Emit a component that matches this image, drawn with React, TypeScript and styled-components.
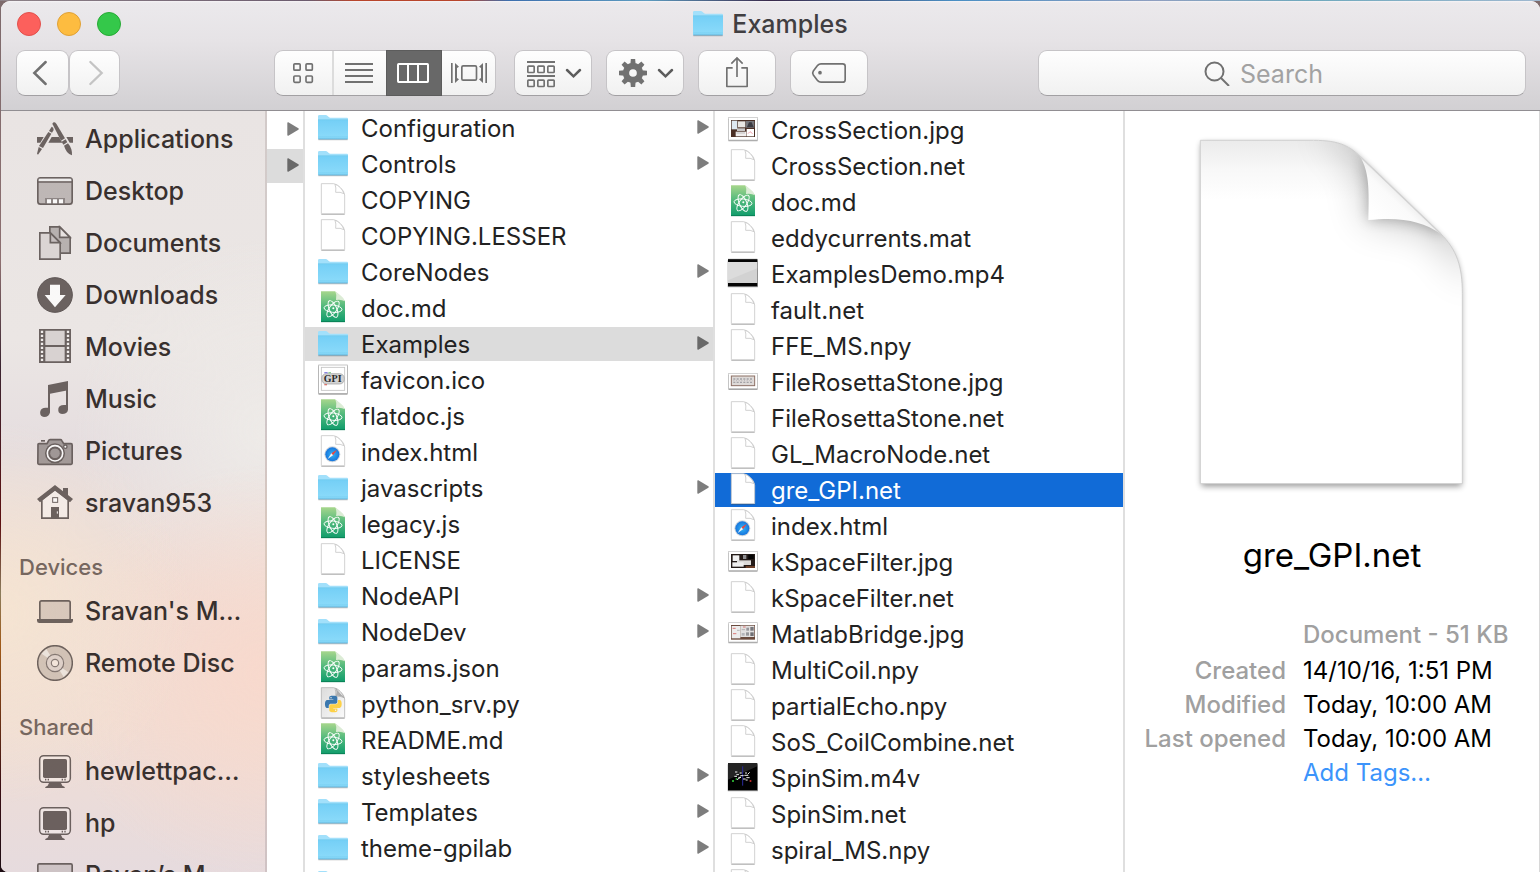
import React from "react";
import styled, { createGlobalStyle, css } from "styled-components";

const GlobalStyle = createGlobalStyle`
  *, *::before, *::after { box-sizing: border-box; }
  html, body { margin: 0; padding: 0; }
  body {
    background: #3a1418;
    font-family: Inter, "Liberation Sans", sans-serif;
    overflow: hidden;
  }
  button, input { font: inherit; color: inherit; }
  ul, dl, dd, h1, h2 { margin: 0; padding: 0; list-style: none; }
`;

const Desktop = styled.div`
  height: 100vh;
  padding: 1px 0 0 1px;
  background:
    linear-gradient(90deg, #8d8288 0, #6b5b6e 20%, #b8452c 23%, #b8452c 30%, #3d6fae 33%, #5d9cc0 42%, #3a2a4c 50%, #4a8fc4 62%, #8f9fc0 75%, #6fa9bd 85%, #9fb8d0 100%) top / 100% 1px no-repeat,
    linear-gradient(180deg, #7d6a6c 0, #8d6f70 30%, #3b2430 42%, #5c0f10 60%, #8b7c5c 68%, #a05a18 74%, #3a0d12 90%, #1c0c12 100%);
`;

const Window = styled.div`
  height: 100%;
  display: flex;
  flex-direction: column;
  overflow: hidden;
  border-radius: 9px 9px 0 7px;
  background: #fff;
`;

/* ---------- title bar ---------- */

const Header = styled.header`
  flex: none;
  border-bottom: 1px solid #918e92;
  background: linear-gradient(180deg, #f6f4f6 0, #ebe9ec 2px, #e6e3e6 40px, #d2d0d3 100%);
`;

const TitleRow = styled.div`
  display: grid;
  grid-template-columns: 1fr auto 1fr;
  align-items: center;
  height: 45px;
  padding: 0 16px;
  margin-bottom: 4px;
`;

const Lights = styled.div`
  display: flex;
  gap: 16px;
`;

const Light = styled.button<{ $fill: string; $edge: string }>`
  width: 24px;
  height: 24px;
  padding: 0;
  border: 1px solid ${(p) => p.$edge};
  border-radius: 50%;
  background: ${(p) => p.$fill};
`;

const Title = styled.h1`
  display: flex;
  align-items: center;
  gap: 9px;
  font-size: 25px;
  line-height: 34px;
  font-weight: 500;
  color: #403e41;
`;

const Toolbar = styled.div`
  display: flex;
  align-items: center;
  padding: 0 14px 14px 15px;
`;

const panel = css`
  height: 46px;
  border: 1px solid #c6c4c7;
  border-bottom-color: #a2a0a3;
  border-radius: 9px;
  background: linear-gradient(180deg, #fefefe, #f1f1f1);
`;

const ToolButton = styled.button<{ $width: number }>`
  ${panel}
  flex: none;
  display: flex;
  width: ${(p) => p.$width}px;
  padding: 0;
  color: #717171;
`;

const NavGroup = styled.nav`
  display: flex;
  margin-right: 154px;
`;

const Views = styled.div`
  ${panel}
  flex: none;
  display: flex;
  margin-right: 18px;
`;

const ViewButton = styled.button<{ $width: number; $active?: boolean; $divided?: boolean }>`
  display: flex;
  align-items: center;
  width: ${(p) => p.$width}px;
  padding: 0;
  border: 0;
  border-right: ${(p) => (p.$divided ? "2px solid #dcdcdc" : "0")};
  background: none;
  color: #717171;
  ${(p) =>
    p.$active &&
    css`
      height: 46px;
      margin: -1px 0;
      background: #686868;
      box-shadow: inset 0 0 0 1px #5c5c5c;
      color: #fff;
    `}
`;

const Actions = styled.div`
  display: flex;
  gap: 14px;
  margin-right: 170px;
`;

const SearchBox = styled.label`
  ${panel}
  flex: 1;
  display: flex;
  align-items: center;
  justify-content: center;
  gap: 10px;
  min-width: 180px;
  color: #717171;
`;

const SearchInput = styled.input`
  width: 120px;
  height: 40px;
  padding: 2px 0 0;
  border: 0;
  outline: 0;
  background: none;
  font-size: 25px;
  &::placeholder {
    color: #a2a2a2;
    opacity: 1;
  }
`;

/* ---------- body ---------- */

const Body = styled.div`
  flex: 1;
  min-height: 0;
  display: flex;
`;

const Sidebar = styled.nav`
  flex: none;
  width: 266px;
  padding-top: 3px;
  overflow: hidden;
  border-right: 2px solid rgba(120, 100, 100, 0.2);
  background:
    radial-gradient(circle at 0 66%, #f5e4d2 0, rgba(245, 228, 210, 0) 190px),
    radial-gradient(circle at 100% 74%, #f8d9cd 0, rgba(248, 217, 205, 0) 210px),
    radial-gradient(circle at 100% 42%, #eeebe8 0, rgba(238, 235, 232, 0) 190px),
    linear-gradient(180deg, #e9e4e3 0, #ebe6e4 30%, #e5dddf 45%, #eeddd6 62%, #f0ddd4 80%, #e6dbde 100%);
`;

const SideHeading = styled.h2`
  padding: 18px 0 0 18px;
  font-size: 22px;
  line-height: 38px;
  font-weight: 500;
  color: #76675f;
`;

const SideLink = styled.a`
  display: flex;
  align-items: center;
  gap: 12px;
  height: 52px;
  padding: 0 0 2px 36px;
  font-size: 25px;
  font-weight: 500;
  color: #38302e;
  text-decoration: none;
  white-space: nowrap;
`;

const SideSvg = styled.svg`
  flex: none;
  width: 36px;
  height: 36px;
  color: #443a38;
  opacity: 0.76;
`;

const Column = styled.ul<{ $width: number; $top: number }>`
  flex: none;
  width: ${(p) => p.$width}px;
  padding-top: ${(p) => p.$top}px;
  overflow: hidden;
  border-right: 2px solid #dfdfdf;
`;

const Row = styled.button<{ $state?: "path" | "selected" }>`
  display: flex;
  align-items: center;
  gap: 12px;
  width: 100%;
  height: 34px;
  margin-bottom: 2px;
  padding: 0 4px 0 12px;
  border: 0;
  background: ${(p) => (p.$state === "path" ? "#dcdcdc" : p.$state === "selected" ? "#116bd7" : "none")};
  color: ${(p) => (p.$state === "selected" ? "#fff" : "#222")};
  font-size: 24px;
  line-height: 34px;
  text-align: left;
  white-space: nowrap;
`;

const Name = styled.span`
  flex: 1;
  padding-top: 2px;
`;

const FileSvg = styled.svg`
  flex: none;
  width: 32px;
  height: 34px;
`;

const ArrowSvg = styled.svg`
  flex: none;
  width: 12px;
  height: 14px;
  margin: 0 0 2px auto;
`;

const Preview = styled.section`
  flex: 1;
  min-width: 0;
  padding-top: 19px;
  border-right: 1px solid #d8d8d8;
  color: #000;
`;

const PreviewSvg = styled.svg`
  display: block;
  width: 282px;
  height: 370px;
  margin: 0 auto;
`;

const PreviewName = styled.h2`
  margin: 35px 0 43px;
  font-size: 33px;
  line-height: 40px;
  font-weight: 400;
  text-align: center;
`;

const Facts = styled.dl`
  display: grid;
  grid-template-columns: 161px 1fr;
  column-gap: 17px;
  font-size: 24px;
  line-height: 34px;
  white-space: nowrap;
`;

const Label = styled.dt`
  text-align: right;
  font-weight: 500;
  color: #a0a0a0;
`;

const Value = styled.dd<{ $muted?: boolean }>`
  font-weight: ${(p) => (p.$muted ? 500 : 400)};
  color: ${(p) => (p.$muted ? "#a0a0a0" : "#000")};
  ${(p) => p.$muted && "padding-bottom: 2px;"}
`;

const TagLink = styled.a`
  color: #3c94fb;
  text-decoration: none;
`;

const DefsSvg = styled.svg`
  position: absolute;
  width: 0;
  height: 0;
`;

/* ---------- drawings ---------- */

const SharedDefs = () => (
  <DefsSvg aria-hidden="true">
    <defs>
      <linearGradient id="folder" x1="0" y1="0" x2="0" y2="1">
        <stop offset="0" stopColor="#74cff6" />
        <stop offset="1" stopColor="#8cdbfa" />
      </linearGradient>
      <linearGradient id="atom" x1="0" y1="0" x2="0" y2="1">
        <stop offset="0" stopColor="#a6d68c" />
        <stop offset="0.5" stopColor="#4fb87c" />
        <stop offset="1" stopColor="#0f9c6b" />
      </linearGradient>
      <linearGradient id="grey" x1="0" y1="0" x2="1" y2="1">
        <stop offset="0" stopColor="#dcdcdc" />
        <stop offset="1" stopColor="#fafafa" />
      </linearGradient>
      <radialGradient id="compass">
        <stop offset="0" stopColor="#35b6f5" />
        <stop offset="1" stopColor="#1674dd" />
      </radialGradient>
    </defs>
  </DefsSvg>
);

const FolderShape = () => (
  <g>
    <path d="M4 86H92" stroke="#000" strokeOpacity=".22" strokeWidth="4" />
    <path d="M3 84V16q0-4 4-4H26q3 0 6 3t7 5H90q3 0 3 3V84z" fill="#a2e0fb" />
    <path d="M3 26H93V81q0 3-3 3H6q-3 0-3-3z" fill="url(#folder)" />
    <path d="M3 26H93M4 78H92" stroke="#63bfe6" strokeOpacity=".6" strokeWidth="2" />
    <path d="M4 84H92" stroke="#55a9d2" strokeWidth="2.5" />
  </g>
);

const Page = ({ fill = "#fff", edge = "#c9c9c9" }: { fill?: string; edge?: string }) => (
  <g>
    <path d="M13 94H83" stroke="#000" strokeOpacity=".3" strokeWidth="3" />
    <path d="M13 2H50Q60 3 70 14Q82 24 83 36V92H13z" fill={fill} stroke={edge} strokeWidth="2.5" />
    <path d="M54 4Q58 14 56 28Q70 26 81 32Q76 20 70 14Q62 6 54 4z" fill="#fff" stroke={edge} strokeWidth="2.5" />
  </g>
);

const PY_HALF =
  "M14.25.18l.9.2.73.26.59.3.45.32.34.34.25.34.16.33.1.3.04.26.02.2-.01.13V8.5l-.05.63-.13.55-.21.46-.26.38-.3.31-.33.25-.35.19-.35.14-.33.1-.3.07-.26.04-.21.02H8.77l-.69.05-.59.14-.5.22-.41.27-.33.32-.27.35-.2.36-.15.37-.1.35-.07.32-.04.27-.02.21v3.06H3.17l-.21-.03-.28-.07-.32-.12-.35-.18-.36-.26-.36-.36-.35-.46-.32-.59-.28-.73-.21-.88-.14-1.05-.05-1.23.06-1.22.16-1.04.24-.87.32-.71.36-.57.4-.44.42-.33.42-.24.4-.16.36-.1.32-.05.24-.01h.16l.06.01h8.16v-.83H6.18l-.01-2.75-.02-.37.05-.34.11-.31.17-.28.25-.26.31-.23.38-.2.44-.18.51-.15.58-.12.64-.1.71-.06.77-.04.84-.02 1.27.05zm-6.3 1.98l-.23.33-.08.41.08.41.23.34.33.22.41.09.41-.09.33-.22.23-.34.08-.41-.08-.41-.23-.33-.33-.22-.41-.09-.41.09z";

const Frame = ({ top, bottom, children }: { top: number; bottom: number; children: React.ReactNode }) => (
  <g>
    <rect x="4" y={top + 4} width="88" height={bottom - top} fill="#000" opacity=".35" rx="2" />
    <rect x="5" y={top} width="86" height={bottom - top} fill="#fff" stroke="#bdbdbd" strokeWidth="2" />
    {children}
  </g>
);

type Kind = "folder" | "page" | "atom" | "favicon" | "safari" | "python" | "cross" | "rosetta" | "kspace" | "matlab" | "mp4" | "m4v";

const drawings: Record<Kind, React.ReactNode> = {
  folder: <FolderShape />,
  page: <Page />,
  atom: (
    <g>
      <path d="M12 1H54L84 30V93H12z" fill="url(#atom)" />
      <path d="M12 92H84" stroke="#0a7f55" strokeWidth="3" />
      <path d="M55 1Q60 12 57 27Q72 24 84 31Q80 20 70 13z" fill="#dcecd6" />
      <g fill="none" stroke="#fff" strokeWidth="2.8">
        <ellipse cx="48" cy="53" rx="27" ry="11" transform="rotate(6 48 53)" />
        <ellipse cx="48" cy="54" rx="27" ry="11" transform="rotate(66 48 54)" />
        <ellipse cx="48" cy="54" rx="28" ry="11" transform="rotate(126 48 54)" />
      </g>
      <circle cx="49" cy="52" r="3" fill="#fff" />
    </g>
  ),
  favicon: (
    <g>
      <rect x="4" y="9" width="88" height="86" fill="#000" opacity=".35" rx="2" />
      <rect x="5" y="6" width="86" height="85" fill="#fff" stroke="#a8a8a8" strokeWidth="2" />
      <rect x="13" y="13" width="70" height="69" fill="#fff" stroke="#c2c2c2" strokeWidth="2.5" />
      <rect x="14" y="32" width="68" height="31" rx="14" fill="#d4d4d4" stroke="#9b9b9b" strokeWidth="2" />
      <path d="M22 29H32" stroke="#8a84e0" strokeWidth="4" />
      <path d="M34 29H42" stroke="#8fce9a" strokeWidth="4" />
      <path d="M22 65H30" stroke="#d9766d" strokeWidth="4" />
      <text x="47" y="58" textAnchor="middle" fontFamily="Liberation Serif, serif" fontWeight="700" fontSize="30" fill="#2b2b2b">GPI</text>
    </g>
  ),
  safari: (
    <g>
      <Page />
      <circle cx="46" cy="58" r="24" fill="#cfd6dc" />
      <circle cx="46" cy="58" r="21" fill="url(#compass)" />
      <path d="M60 44L48 61L43 55z" fill="#f0453c" />
      <path d="M32 72L43 55L48 61z" fill="#f5f5f5" />
    </g>
  ),
  python: (
    <g>
      <Page fill="url(#grey)" edge="#b5b5b5" />
      <path d="M56 4Q60 12 57 27Q70 25 82 32z" fill="#777" opacity=".6" />
      <g transform="translate(24 26) scale(2.08)">
        <path d={PY_HALF} fill="#3b78ae" />
        <path d={PY_HALF} fill="#fdd147" transform="rotate(180 12 12)" />
      </g>
    </g>
  ),
  cross: (
    <Frame top={13} bottom={81}>
      <rect x="12" y="21" width="72" height="51" fill="#4a2f25" />
      <rect x="14" y="23" width="17" height="26" fill="#dfe9f2" />
      <rect x="33" y="25" width="22" height="18" fill="#e9e6e3" />
      <rect x="56" y="24" width="26" height="20" fill="#77777c" />
      <path d="M60 42L66 28L74 28L80 42z" fill="#3b3b42" />
      <rect x="30" y="46" width="24" height="8" fill="#c9c6c6" />
      <rect x="26" y="56" width="32" height="14" fill="#f1eeee" />
      <rect x="59" y="48" width="22" height="22" fill="#fff" />
      <path d="M28 60H54" stroke="#aaa" strokeWidth="2" />
      <path d="M63 62L69 56L77 62" stroke="#e78" strokeWidth="2" fill="none" />
    </Frame>
  ),
  rosetta: (
    <Frame top={25} bottom={71}>
      <rect x="13" y="33" width="70" height="29" fill="#dedad8" stroke="#8c7065" strokeWidth="3" />
      <path d="M19 42H78M19 52H76" stroke="#a3a2a6" strokeWidth="4" strokeDasharray="6 4" />
      <path d="M19 47H76" stroke="#b8b6b8" strokeWidth="3" strokeDasharray="3 5" />
    </Frame>
  ),
  kspace: (
    <Frame top={19} bottom={76}>
      <rect x="12" y="27" width="72" height="42" fill="#241b18" />
      <rect x="17" y="31" width="20" height="17" fill="#f2f2f2" />
      <rect x="48" y="30" width="10" height="12" fill="#8d8d90" />
      <rect x="64" y="29" width="16" height="13" fill="#050505" />
      <rect x="30" y="46" width="42" height="14" fill="#dcdad8" />
      <rect x="16" y="52" width="34" height="13" fill="#efefef" />
      <path d="M56 66H84" stroke="#6b3f28" strokeWidth="6" />
    </Frame>
  ),
  matlab: (
    <Frame top={17} bottom={75}>
      <rect x="12" y="24" width="72" height="44" fill="#6a4a3d" />
      <rect x="14" y="27" width="26" height="37" fill="#ededed" />
      <rect x="40" y="26" width="42" height="34" fill="#e2e0e0" />
      <path d="M17 34H26M18 50H28M48 30H56" stroke="#dd7a78" strokeWidth="3" />
      <path d="M30 40H38M44 38H54" stroke="#999" strokeWidth="2" />
      <rect x="58" y="32" width="8" height="9" fill="#97979b" />
      <rect x="70" y="30" width="10" height="11" fill="#77777c" />
      <rect x="57" y="46" width="9" height="10" fill="#97979a" />
      <rect x="70" y="46" width="10" height="11" fill="#707075" />
      <rect x="44" y="48" width="9" height="8" fill="#b4b4b8" />
    </Frame>
  ),
  mp4: (
    <g>
      <rect x="2" y="9" width="91" height="82" fill="#000" opacity=".35" rx="2" />
      <rect x="3" y="6" width="88" height="82" fill="#050505" />
      <rect x="3" y="15" width="88" height="63" fill="#d2d2d2" />
      <path d="M3 15H91V34L3 70z" fill="#fff" opacity=".22" />
      <path d="M3 7H91" stroke="#444" strokeWidth="2" />
    </g>
  ),
  m4v: (
    <g>
      <rect x="2" y="9" width="91" height="82" fill="#000" opacity=".35" rx="2" />
      <rect x="3" y="6" width="88" height="82" fill="#000" />
      <path d="M3 6H91V16L3 56z" fill="#fff" opacity=".14" />
      <path d="M47 16V74" stroke="#2a2a9c" strokeWidth="3" />
      <path d="M24 33h7M28 41h8M38 36h6M22 46h8M40 44h10M54 36h6M52 43h12M58 50h10M34 49h8M48 54h8M30 56l12-8M62 40l6-6M56 57h6" stroke="#eee" strokeWidth="3" />
      <path d="M15 60h6M26 54h4" stroke="#36d33c" strokeWidth="5" />
      <path d="M68 60h5" stroke="#e03030" strokeWidth="5" />
    </g>
  ),
};

const FileIcon = ({ kind }: { kind: Kind }) => (
  <FileSvg viewBox="0 0 96 102" aria-hidden="true">
    {drawings[kind]}
  </FileSvg>
);

const Arrow = ({ dark }: { dark?: boolean }) => (
  <ArrowSvg viewBox="0 0 36 42" aria-hidden="true">
    <path d="M1 3q0-3 3-2L34 19q3 2 0 4L4 41q-3 1-3-2z" fill={dark ? "#696969" : "#7d7d7d"} />
  </ArrowSvg>
);

type Place = "apps" | "desktop" | "documents" | "downloads" | "movies" | "music" | "pictures" | "home" | "laptop" | "disc" | "monitor" | "imac";

const places: Record<Place, React.ReactNode> = {
  apps: (
    <g fill="currentColor">
      <path d="M0 48H20L10 65H0zM44 48H66L76 65H34zM88 48H108V65H98z" />
      <path d="M46 8q5-8 12 0L84 52L72 59z" />
      <path d="M74 62L86 55L91 64L79 71z" />
      <path d="M81 74L93 67Q106 82 105 103Q88 98 81 74z" />
      <path d="M44 17Q50 18 50 27L45 35L36 30z" />
      <path d="M34 33L43 38L18 81L6 75z" />
      <path d="M5 78L15 84L3 101L0 98z" />
    </g>
  ),
  desktop: (
    <g>
      <rect x="2.500" y="14.500" width="103" height="79" rx="8" fill="currentColor" fillOpacity=".35" stroke="currentColor" strokeWidth="5" />
      <rect x="5" y="17" width="98" height="8" fill="#fff" opacity=".8" />
      <path d="M3 27H105" stroke="currentColor" strokeWidth="5" />
      <path d="M24 75H84V91H24z" fill="currentColor" opacity=".6" />
      <path d="M30 79H42V91H30zM48 79H60V91H48zM66 79H78V91H66z" fill="#fff" />
    </g>
  ),
  documents: (
    <g stroke="currentColor" strokeWidth="5">
      <path d="M38.500 5.500H68L99.500 37V84.500H38.500z" fill="#a8a1a0" />
      <path d="M68 6V37H99z" fill="#e6e1e0" />
      <path d="M8.500 23.500H40L69.500 53V102.500H8.500z" fill="#d6d0cf" />
      <path d="M40 24V53H69z" fill="#b8b1b0" />
    </g>
  ),
  downloads: (
    <g>
      <circle cx="54" cy="54" r="52" fill="currentColor" stroke="#2f2625" strokeWidth="3" />
      <path d="M39 23H69V54H86L54 91L23 54H39z" fill="#fff" />
    </g>
  ),
  movies: (
    <g>
      <path d="M6 0H102V102H6z" fill="currentColor" />
      <path d="M25 5H83V48H25zM25 54H83V97H25z" fill="#d3cdcc" />
      <path d="M15 5V99M93 5V99" stroke="#f4f0ef" strokeWidth="7" strokeDasharray="7 5" />
    </g>
  ),
  music: (
    <g fill="currentColor">
      <path d="M33 12L93 0V28L39 38V94H33z" />
      <path d="M87 20H93V84H87z" />
      <path d="M10 91q2-11 16-11h13v14q-2 14-18 14q-14-2-11-17z" />
      <path d="M64 83q2-11 16-11h13v14q-2 13-18 13q-13-2-11-16z" />
    </g>
  ),
  pictures: (
    <g>
      <path d="M3 34Q3 32 6 32H30L36 21Q37 20 40 20H70Q73 20 74 22L80 32H102Q105.500 32 105.500 36V91Q105.500 94 102 94H6Q2.500 94 2.500 91z" fill="currentColor" fillOpacity=".55" stroke="currentColor" strokeWidth="5" />
      <path d="M12 21H24V26H12z" fill="currentColor" />
      <circle cx="54" cy="61" r="30" fill="currentColor" />
      <circle cx="54" cy="61" r="23" fill="currentColor" stroke="#fff" strokeWidth="5" />
      <circle cx="54" cy="61" r="16" fill="#8a8280" stroke="currentColor" strokeWidth="3" />
      <circle cx="85" cy="41" r="5" fill="#fff" stroke="currentColor" strokeWidth="4" />
    </g>
  ),
  home: (
    <g>
      <path d="M14.500 44V99.500H93.500V44L54 12z" fill="#fff" fillOpacity=".45" stroke="currentColor" strokeWidth="5" />
      <path d="M54 0L78 19V9H93V30L108 42L99 52L54 17L9 52L0 42z" fill="currentColor" />
      <rect x="47" y="38" width="15" height="14" fill="#fff" stroke="currentColor" strokeWidth="3" />
      <path d="M42 66H66V100H42z" fill="currentColor" />
      <path d="M61 79V86" stroke="#fff" strokeWidth="3" />
    </g>
  ),
  laptop: (
    <g>
      <rect x="8.500" y="23.500" width="91" height="57" rx="5" fill="currentColor" fillOpacity=".2" stroke="currentColor" strokeWidth="5" />
      <path d="M0 78H108V83Q108 90 101 90H7Q0 90 0 83z" fill="currentColor" />
    </g>
  ),
  disc: (
    <g>
      <circle cx="54" cy="54" r="52" fill="currentColor" fillOpacity=".25" stroke="currentColor" strokeWidth="4.500" />
      <path d="M54 54L14 26L28 12zM54 54L94 82L80 96z" fill="#fff" opacity=".6" />
      <circle cx="54" cy="54" r="26" fill="#d8cbc5" stroke="currentColor" strokeOpacity=".8" strokeWidth="3.500" />
      <circle cx="54" cy="54" r="11" fill="#f3e6dd" stroke="currentColor" strokeOpacity=".8" strokeWidth="3.500" />
    </g>
  ),
  monitor: (
    <g>
      <rect x="8" y="8" width="92" height="80" rx="12" fill="#fff" fillOpacity=".35" stroke="currentColor" strokeWidth="4.500" />
      <rect x="18" y="18" width="72" height="57" rx="5" fill="currentColor" />
      <path d="M24 80h4M32 80h4M74 80h4M82 80h4" stroke="currentColor" strokeWidth="5" />
      <path d="M36 90H72L76 98Q84 100 84 105H24Q24 100 32 98z" fill="currentColor" />
    </g>
  ),
  imac: (
    <g>
      <rect x="2.500" y="20.500" width="103" height="70" rx="4" fill="currentColor" fillOpacity=".2" stroke="currentColor" strokeWidth="5" />
    </g>
  ),
};

const stroke = { fill: "none", stroke: "currentColor", strokeWidth: 5 } as const;

const Glyph = ({ x, width, children }: { x: number; width: number; children: React.ReactNode }) => (
  <svg viewBox={`${x} 153 ${width * 3} 132`} width={width} height={44} aria-hidden="true">
    {children}
  </svg>
);

const teeth = [0, 45, 90, 135, 180, 225, 270, 315];

/* ---------- data ---------- */

type Entry = { name: string; kind: Kind; open?: "path" | "selected" };

const rootFiles: Entry[] = [
  { name: "Configuration", kind: "folder" },
  { name: "Controls", kind: "folder" },
  { name: "COPYING", kind: "page" },
  { name: "COPYING.LESSER", kind: "page" },
  { name: "CoreNodes", kind: "folder" },
  { name: "doc.md", kind: "atom" },
  { name: "Examples", kind: "folder", open: "path" },
  { name: "favicon.ico", kind: "favicon" },
  { name: "flatdoc.js", kind: "atom" },
  { name: "index.html", kind: "safari" },
  { name: "javascripts", kind: "folder" },
  { name: "legacy.js", kind: "atom" },
  { name: "LICENSE", kind: "page" },
  { name: "NodeAPI", kind: "folder" },
  { name: "NodeDev", kind: "folder" },
  { name: "params.json", kind: "atom" },
  { name: "python_srv.py", kind: "python" },
  { name: "README.md", kind: "atom" },
  { name: "stylesheets", kind: "folder" },
  { name: "Templates", kind: "folder" },
  { name: "theme-gpilab", kind: "folder" },
  { name: "", kind: "folder" },
];

const exampleFiles: Entry[] = [
  { name: "CrossSection.jpg", kind: "cross" },
  { name: "CrossSection.net", kind: "page" },
  { name: "doc.md", kind: "atom" },
  { name: "eddycurrents.mat", kind: "page" },
  { name: "ExamplesDemo.mp4", kind: "mp4" },
  { name: "fault.net", kind: "page" },
  { name: "FFE_MS.npy", kind: "page" },
  { name: "FileRosettaStone.jpg", kind: "rosetta" },
  { name: "FileRosettaStone.net", kind: "page" },
  { name: "GL_MacroNode.net", kind: "page" },
  { name: "gre_GPI.net", kind: "page", open: "selected" },
  { name: "index.html", kind: "safari" },
  { name: "kSpaceFilter.jpg", kind: "kspace" },
  { name: "kSpaceFilter.net", kind: "page" },
  { name: "MatlabBridge.jpg", kind: "matlab" },
  { name: "MultiCoil.npy", kind: "page" },
  { name: "partialEcho.npy", kind: "page" },
  { name: "SoS_CoilCombine.net", kind: "page" },
  { name: "SpinSim.m4v", kind: "m4v" },
  { name: "SpinSim.net", kind: "page" },
  { name: "spiral_MS.npy", kind: "page" },
  { name: "", kind: "page" },
];

type SideItem = { label: string; icon: Place };

const sections: { heading?: string; items: SideItem[] }[] = [
  {
    items: [
      { label: "Applications", icon: "apps" },
      { label: "Desktop", icon: "desktop" },
      { label: "Documents", icon: "documents" },
      { label: "Downloads", icon: "downloads" },
      { label: "Movies", icon: "movies" },
      { label: "Music", icon: "music" },
      { label: "Pictures", icon: "pictures" },
      { label: "sravan953", icon: "home" },
    ],
  },
  {
    heading: "Devices",
    items: [
      { label: "Sravan's M…", icon: "laptop" },
      { label: "Remote Disc", icon: "disc" },
    ],
  },
  {
    heading: "Shared",
    items: [
      { label: "hewlettpac…", icon: "monitor" },
      { label: "hp", icon: "monitor" },
      { label: "Pavan’s M…", icon: "imac" },
    ],
  },
];

const FileColumn = ({ entries, top }: { entries: Entry[]; top: number }) => (
  <Column $width={410} $top={top}>
    {entries.map((e, i) => (
      <li key={i}>
        <Row type="button" $state={e.open} aria-label={e.name ? undefined : e.kind}>
          <FileIcon kind={e.kind} />
          <Name>{e.name}</Name>
          {e.kind === "folder" && <Arrow dark={e.open === "path"} />}
        </Row>
      </li>
    ))}
  </Column>
);

const BigDocument = () => (
  <PreviewSvg viewBox="212 60 846 1110" role="img" aria-label="Document">
    <defs>
      <clipPath id="sheet">
        <path d="M240 91H580C660 91 690 110 722 142L960 370C1010 420 1026 470 1026 550V1121H240z" />
      </clipPath>
      <linearGradient id="sheetTop" x1="0" y1="91" x2="0" y2="270" gradientUnits="userSpaceOnUse">
        <stop offset="0" stopColor="#ebebeb" />
        <stop offset="0.5" stopColor="#f8f8f8" />
        <stop offset="1" stopColor="#fff" />
      </linearGradient>
      <linearGradient id="flap" x1="760" y1="320" x2="850" y2="225" gradientUnits="userSpaceOnUse">
        <stop offset="0" stopColor="#fff" />
        <stop offset="0.6" stopColor="#fafafa" />
        <stop offset="1" stopColor="#e4e4e4" />
      </linearGradient>
      <filter id="soft" x="-1" y="-1" width="3" height="3">
        <feGaussianBlur stdDeviation="62" />
      </filter>
      <filter id="near" x="-1" y="-1" width="3" height="3">
        <feGaussianBlur stdDeviation="20" />
      </filter>
      <filter id="drop" x="-0.200" y="-0.200" width="1.400" height="1.400">
        <feGaussianBlur stdDeviation="9" />
      </filter>
    </defs>
    <path d="M243 100H580C660 100 690 116 722 148L957 376C1008 425 1023 475 1023 555V1129H243z" fill="#000" opacity=".42" filter="url(#drop)" />
    <path d="M240 91H580C660 91 690 110 722 142L960 370C1010 420 1026 470 1026 550V1121H240z" fill="#fff" />
    <g clipPath="url(#sheet)">
      <rect x="240" y="91" width="786" height="180" fill="url(#sheetTop)" />
      <path d="M600 60L722 142C745 185 746 230 744 330C840 322 905 335 960 370L1060 520V60z" fill="#000" opacity=".27" filter="url(#soft)" />
      <path d="M716 142C745 185 746 230 744 330C840 322 905 335 960 370L1000 300z" fill="#000" opacity=".25" filter="url(#near)" />
    </g>
    <path d="M240 91H580C660 91 690 110 722 142L960 370C1010 420 1026 470 1026 550V1121H240z" fill="none" stroke="#cfcfcf" strokeWidth="3" />
    <path d="M720 140C745 185 747 230 744 330C840 320 905 332 962 372z" fill="url(#flap)" />
    <path d="M720 140L962 372" stroke="#d2d2d2" strokeWidth="4" />
  </PreviewSvg>
);

export default function App() {
  return (
    <Desktop>
      <GlobalStyle />
      <SharedDefs />
      <Window>
        <Header>
          <TitleRow>
            <Lights>
              <Light type="button" aria-label="Close" $fill="#fc605c" $edge="#e2504c" />
              <Light type="button" aria-label="Minimise" $fill="#fdbc40" $edge="#e0a136" />
              <Light type="button" aria-label="Zoom" $fill="#34c84a" $edge="#27aa35" />
            </Lights>
            <Title>
              <svg viewBox="3 12 90 78" width="30" height="26" aria-hidden="true">
                <FolderShape />
              </svg>
              Examples
            </Title>
          </TitleRow>
          <Toolbar>
            <NavGroup aria-label="History">
              <ToolButton type="button" aria-label="Back" $width={53}>
                <Glyph x={51} width={51}>
                  <path d="M137 186L103 219L137 252" {...stroke} strokeWidth={7.5} strokeLinecap="round" />
                </Glyph>
              </ToolButton>
              <ToolButton type="button" aria-label="Forward" $width={51}>
                <Glyph x={210} width={49}>
                  <path d="M271 186L305 219L271 252" {...stroke} stroke="#c4c4c4" strokeWidth={7} strokeLinecap="round" />
                </Glyph>
              </ToolButton>
            </NavGroup>
            <Views role="group" aria-label="View">
              <ViewButton type="button" aria-label="Icons" $width={59} $divided>
                <Glyph x={825} width={57}>
                  <g {...stroke}>
                    <rect x="881.500" y="191.500" width="19" height="19" rx="3" />
                    <rect x="918" y="191.500" width="19" height="19" rx="3" />
                    <rect x="881.500" y="228" width="19" height="19" rx="3" />
                    <rect x="918" y="228" width="19" height="19" rx="3" />
                  </g>
                </Glyph>
              </ViewButton>
              <ViewButton type="button" aria-label="List" $width={52}>
                <Glyph x={1002} width={52}>
                  <path d="M1035 192H1119M1035 210H1119M1035 228H1119M1035 246H1119" {...stroke} strokeWidth={6} />
                </Glyph>
              </ViewButton>
              <ViewButton type="button" aria-label="Columns" aria-pressed="true" $width={56} $active>
                <Glyph x={1158} width={56}>
                  <g {...stroke} strokeWidth={6}>
                    <rect x="1194" y="192" width="90" height="54" rx="2" />
                    <path d="M1224 192V246M1254 192V246" />
                  </g>
                </Glyph>
              </ViewButton>
              <ViewButton type="button" aria-label="Cover Flow" $width={53}>
                <Glyph x={1326} width={53}>
                  <path d="M1355.500 189V249M1458.500 189V249" {...stroke} />
                  <rect x="1385.500" y="197.500" width="44" height="43" rx="4" {...stroke} />
                  <path d="M1365 189L1377 200L1371 204V234L1377 238L1365 249zM1449 189L1437 200L1443 204V234L1437 238L1449 249z" fill="currentColor" />
                </Glyph>
              </ViewButton>
            </Views>
            <Actions>
              <ToolButton type="button" aria-label="Arrange" $width={78}>
                <Glyph x={75} width={76}>
                  <path d="M111 186H195M111 228H195" {...stroke} strokeWidth={6} />
                  <g {...stroke}>
                    {[113.5, 143.5, 173.5].map((x) => (
                      <React.Fragment key={x}>
                        <rect x={x} y="198.500" width="19" height="19" rx="2" />
                        <rect x={x} y="240.500" width="19" height="19" rx="2" />
                      </React.Fragment>
                    ))}
                  </g>
                  <path d="M231 210L250.500 229L270 210" {...stroke} stroke="#5c5c5c" strokeWidth={7.5} strokeLinecap="round" />
                </Glyph>
              </ToolButton>
              <ToolButton type="button" aria-label="Actions" $width={78}>
                <Glyph x={351} width={76}>
                  <circle cx="429" cy="219" r="21" fill="none" stroke="currentColor" strokeWidth="19" />
                  {teeth.map((a) => (
                    <path key={a} d="M421 194L422.500 177H435.500L437 194z" fill="currentColor" transform={`rotate(${a} 429 219)`} />
                  ))}
                  <path d="M507 210L526.500 229L546 210" {...stroke} stroke="#5c5c5c" strokeWidth={7.5} strokeLinecap="round" />
                </Glyph>
              </ToolButton>
              <ToolButton type="button" aria-label="Share" $width={78}>
                <Glyph x={627} width={76}>
                  <g {...stroke}>
                    <path d="M728 203.500H710.500V259.500H771.500V203.500H754" strokeLinejoin="round" />
                    <path d="M741 231V175M724 191L741 174L758 191" />
                  </g>
                </Glyph>
              </ToolButton>
              <ToolButton type="button" aria-label="Tags" $width={78}>
                <Glyph x={903} width={76}>
                  <path d="M993 191.500H1058Q1065.500 191.500 1065.500 199V239Q1065.500 246.500 1058 246.500H993Q987 246.500 983 242L970 225Q966 219 970 213L983 196Q987 191.500 993 191.500z" {...stroke} />
                  <circle cx="990" cy="218" r="5.500" fill="currentColor" />
                </Glyph>
              </ToolButton>
            </Actions>
            <SearchBox>
              <svg viewBox="0 0 26 26" width="26" height="26" aria-hidden="true">
                <circle cx="10.500" cy="11.500" r="9" fill="none" stroke="currentColor" strokeWidth="2" />
                <path d="M17 18L25 26" stroke="currentColor" strokeWidth="2" />
              </svg>
              <SearchInput type="text" placeholder="Search" aria-label="Search" />
            </SearchBox>
          </Toolbar>
        </Header>
        <Body>
          <Sidebar aria-label="Favourites">
            {sections.map((s, i) => (
              <React.Fragment key={i}>
                {s.heading && <SideHeading>{s.heading}</SideHeading>}
                {s.items.map((item) => (
                  <SideLink key={item.label} href="#">
                    <SideSvg viewBox="0 0 108 108" aria-hidden="true">
                      {places[item.icon]}
                    </SideSvg>
                    {item.label}
                  </SideLink>
                ))}
              </React.Fragment>
            ))}
          </Sidebar>
          <Column $width={38} $top={2}>
            <li>
              <Row type="button" aria-label="Folder">
                <Arrow />
              </Row>
            </li>
            <li>
              <Row type="button" aria-label="Open folder" $state="path">
                <Arrow dark />
              </Row>
            </li>
          </Column>
          <FileColumn entries={rootFiles} top={0} />
          <FileColumn entries={exampleFiles} top={2} />
          <Preview>
            <BigDocument />
            <PreviewName>gre_GPI.net</PreviewName>
            <Facts>
              <Label />
              <Value $muted>Document - 51 KB</Value>
              <Label>Created</Label>
              <Value>14/10/16, 1:51 PM</Value>
              <Label>Modified</Label>
              <Value>Today, 10:00 AM</Value>
              <Label>Last opened</Label>
              <Value>Today, 10:00 AM</Value>
              <Label />
              <Value>
                <TagLink href="#">Add Tags…</TagLink>
              </Value>
            </Facts>
          </Preview>
        </Body>
      </Window>
    </Desktop>
  );
}
